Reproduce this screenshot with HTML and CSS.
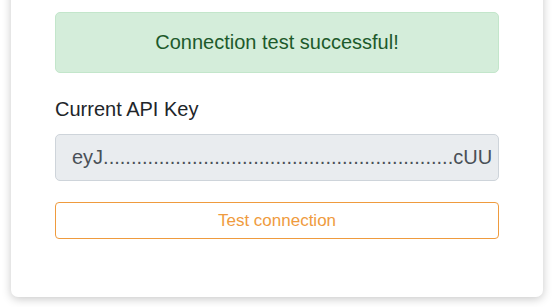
FILE: index.html
```html
<!DOCTYPE html>
<html lang="en">
<head>
  <meta charset="UTF-8" />
  <meta name="viewport" content="width=device-width, initial-scale=1.0" />
  <title>API Settings</title>
  <link rel="stylesheet" href="styles.css">
</head>
<body>
  <div class="card">
    <div class="alert">Connection test successful!</div>

    <label class="label" for="apiKey">Current API Key</label>
    <input class="key-input" id="apiKey" type="text" readonly
      value="eyJ...............................................................cUU" />

    <button class="test-btn">Test connection</button>
  </div>
</body>
</html>
```

FILE: styles.css
```css
:root {
  --page-bg: #ffffff;
  --card-bg: #ffffff;
  --text-color: #212529;
  --success-bg: #d4edda;
  --success-border: #c3e6cb;
  --success-text: #1d5a2b;
  --input-bg: #e9ecef;
  --input-border: #ced4da;
  --input-text: #495057;
  --warning: #ef9b3e;
}

html, body { height: 100%; }
body {
  margin: 0;
  font-family: "Liberation Sans", Arial, sans-serif;
  background-color: var(--page-bg);
  color: var(--text-color);
  overflow: hidden;
}

.card {
  width: 532px;
  box-sizing: border-box;
  margin: -20px 0 0 11px;
  padding: 32px 44px 58px;
  background-color: var(--card-bg);
  border-radius: 7px;
  box-shadow: 0 2px 10px rgba(0, 0, 0, 0.22);
  display: flex;
  flex-direction: column;
}

.alert {
  height: 61px;
  box-sizing: border-box;
  display: flex;
  align-items: center;
  justify-content: center;
  background-color: var(--success-bg);
  border: 1px solid var(--success-border);
  border-radius: 5px;
  color: var(--success-text);
  font-size: 20px;
}

.label {
  margin-top: 21px;
  font-size: 20px;
  line-height: 30px;
}

.key-input {
  margin-top: 10px;
  height: 47px;
  box-sizing: border-box;
  padding: 0 2px 0 16px;
  background-color: var(--input-bg);
  border: 1px solid var(--input-border);
  border-radius: 5px;
  color: var(--input-text);
  font-family: inherit;
  font-size: 20px;
  outline: none;
}

.test-btn {
  margin-top: 21px;
  height: 37px;
  background: transparent;
  border: 1px solid var(--warning);
  border-radius: 4px;
  color: var(--warning);
  font-family: inherit;
  font-size: 17px;
  cursor: pointer;
}
```
